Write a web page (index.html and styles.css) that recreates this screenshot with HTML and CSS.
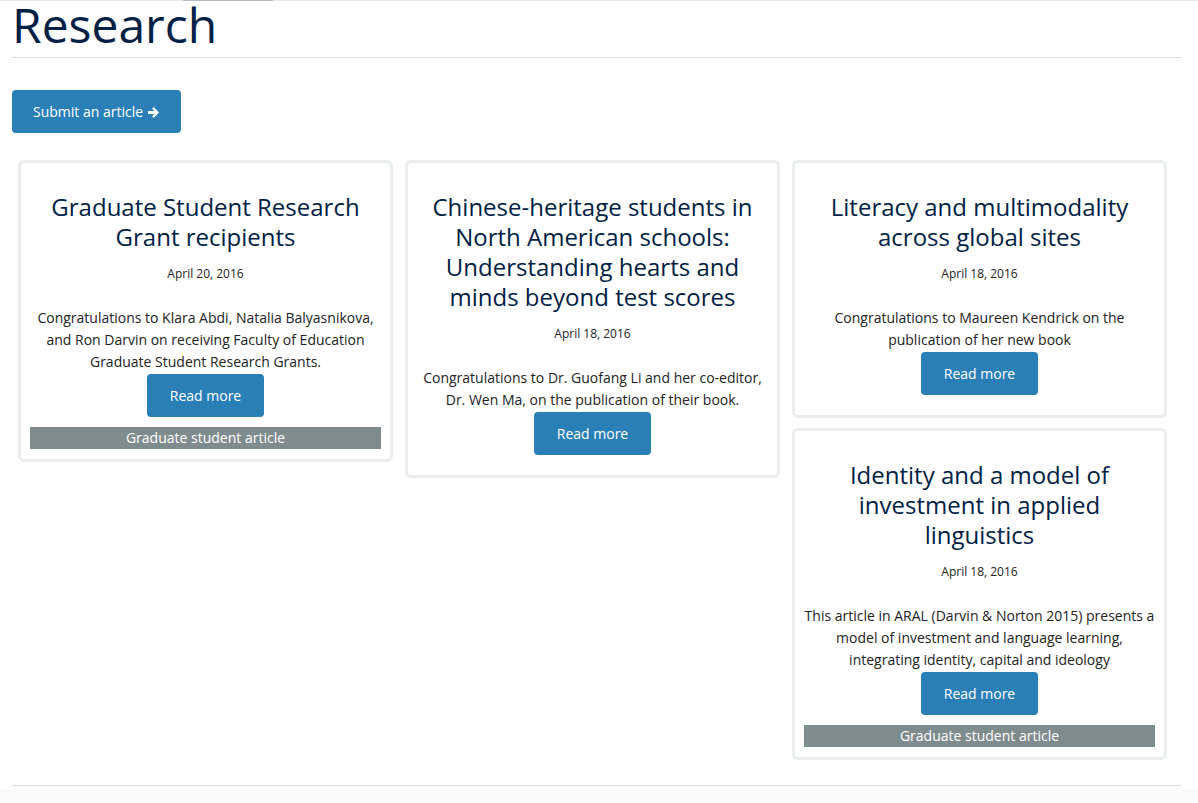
FILE: index.html
```html
<!DOCTYPE html>
<html lang="en">
<head>
<meta charset="utf-8">
<title>Research</title>
<link rel="stylesheet" href="styles.css">
</head>
<body>
<div class="topline"><div class="topline-seg"></div></div>
<main class="container">
  <h1 class="page-title">Research</h1>
  <div class="actions">
    <a class="btn btn-submit" href="#">Submit an article <svg class="arrow" viewBox="0 0 14 14" width="13" height="13" aria-hidden="true"><path d="M1 5.5H8.1L5.5 2.9L7.2 1.2L13 7L7.2 12.8L5.5 11.1L8.1 8.5H1Z" fill="#fff"/></svg></a>
  </div>
  <div class="grid">
    <div class="col">
      <article class="card">
        <h2 class="card-title">Graduate Student Research Grant recipients</h2>
        <div class="card-date">April 20, 2016</div>
        <p class="card-body">Congratulations to Klara Abdi, Natalia Balyasnikova, and Ron Darvin on receiving Faculty of Education Graduate Student Research Grants.</p>
        <a class="btn btn-read" href="#">Read more</a>
        <div class="card-foot"><div class="tag">Graduate student article</div></div>
      </article>
    </div>
    <div class="col">
      <article class="card">
        <h2 class="card-title">Chinese-heritage students in North American schools: Understanding hearts and minds beyond test scores</h2>
        <div class="card-date">April 18, 2016</div>
        <p class="card-body">Congratulations to Dr. Guofang Li and her co-editor, Dr. Wen Ma, on the publication of their book.</p>
        <a class="btn btn-read" href="#">Read more</a>
        <div class="card-foot"></div>
      </article>
    </div>
    <div class="col">
      <article class="card">
        <h2 class="card-title">Literacy and multimodality across global sites</h2>
        <div class="card-date">April 18, 2016</div>
        <p class="card-body">Congratulations to Maureen Kendrick on the publication of her new book</p>
        <a class="btn btn-read" href="#">Read more</a>
        <div class="card-foot"></div>
      </article>
      <article class="card">
        <h2 class="card-title">Identity and a model of investment in applied linguistics</h2>
        <div class="card-date">April 18, 2016</div>
        <p class="card-body">This article in ARAL (Darvin &amp; Norton 2015) presents a model of investment and language learning, integrating identity, capital and ideology</p>
        <a class="btn btn-read" href="#">Read more</a>
        <div class="card-foot"><div class="tag">Graduate student article</div></div>
      </article>
    </div>
  </div>
  <hr class="bottom-rule">
</main>
<footer class="footer"></footer>
</body>
</html>
```
FILE: styles.css
```css
* { box-sizing: border-box; }
html, body { margin: 0; padding: 0; background: #fff; }
body {
  font-family: "Open Sans", "Noto Sans", "Liberation Sans", sans-serif;
  color: #222;
  font-size: 14px;
}
.topline {
  height: 1px;
  background: #e6e8ea;
}
.topline-seg {
  margin-left: 183px;
  width: 90px;
  height: 1px;
  background: #b3bac0;
}
.container {
  width: 1170px;
  margin-left: 12px;
}
.page-title {
  margin: 0;
  font-size: 48px;
  line-height: 48px;
  font-weight: 400;
  color: #002145;
  padding-bottom: 8px;
  border-bottom: 1px solid #d9dee3;
}
.actions {
  padding-top: 32px;
}
.btn {
  display: inline-block;
  background: #2a7fb7;
  color: #fff;
  text-decoration: none;
  font-size: 14px;
  line-height: 21px;
  border-radius: 4px;
}
.btn-submit {
  padding: 11px 21px;
}
.arrow {
  vertical-align: -2px;
}
.grid {
  display: grid;
  grid-template-columns: repeat(3, 375px);
  column-gap: 12px;
  padding-left: 6px;
  margin-top: 27px;
  align-items: start;
}
.col {
  display: flex;
  flex-direction: column;
  gap: 10px;
}
.card {
  border: 3px solid #e9edee;
  border-radius: 6px;
  padding: 29px 8px 10px;
  text-align: center;
}
.card-title {
  margin: 0;
  font-size: 24px;
  line-height: 30px;
  font-weight: 400;
  color: #002145;
}
.card-date {
  margin-top: 13px;
  font-size: 12px;
  line-height: 17px;
}
.card-body {
  margin: 25px 0 1px;
  font-size: 14px;
  line-height: 22px;
}
.btn-read {
  padding: 11px 23px;
}
.card-foot {
  margin: 10px 1px 0;
}
.tag {
  background: #7f8c8d;
  color: #fff;
  font-size: 14px;
  line-height: 22px;
}
.bottom-rule {
  margin: 25px 0 0;
  border: 0;
  border-top: 1px solid #d9dee3;
  height: 0;
}
.footer {
  margin-top: 3px;
  height: 40px;
  background: #fafafa;
}
```
